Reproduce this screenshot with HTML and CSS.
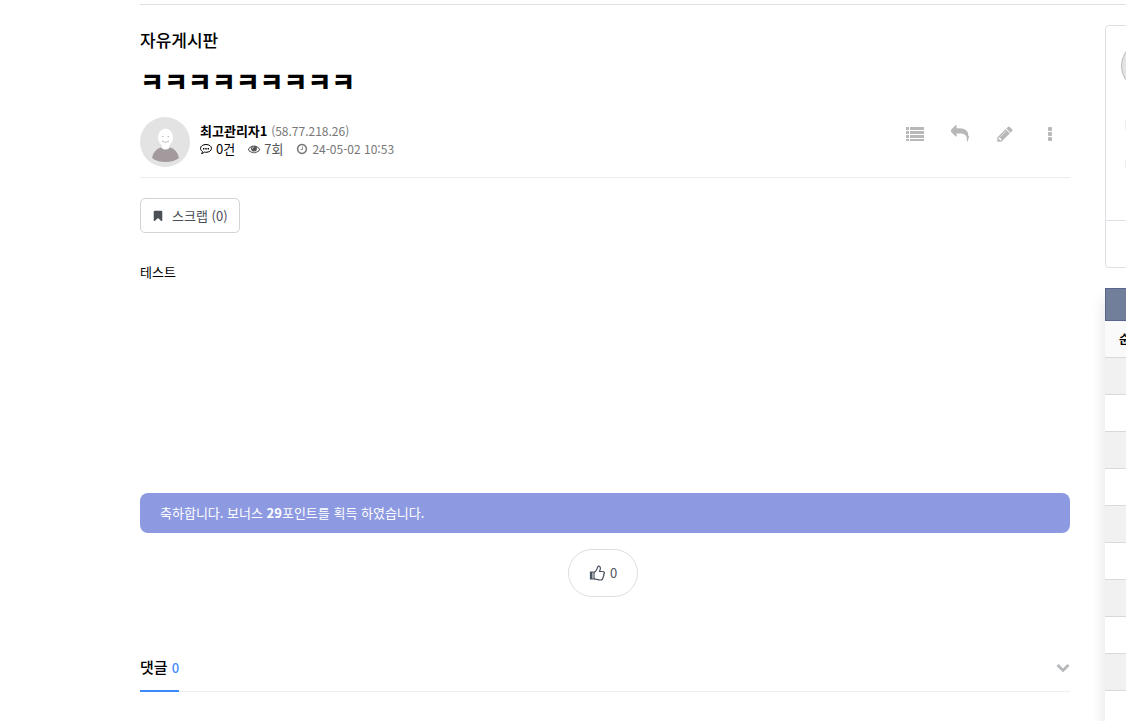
FILE: index.html
```html
<!DOCTYPE html>
<html lang="ko">
<head>
    <meta charset="UTF-8">
    <meta name="viewport" content="width=device-width, initial-scale=1.0">
    <title>자유게시판</title>
    <link rel="stylesheet" href="styles.css">
</head>
<body>
    <div class="wrapper">
        <main class="board">
            <h2 class="board-name">자유게시판</h2>
            <h1 class="post-title">ㅋㅋㅋㅋㅋㅋㅋㅋㅋ</h1>

            <header class="post-info">
                <svg class="profile" viewBox="0 0 50 50" aria-hidden="true">
                    <circle cx="25" cy="25" r="25" fill="#e3e3e3"/>
                    <path d="M12 41q1-8 10-11h7q9 3 10 11-5 4-13.500 4T12 41z" fill="#a29a9c"/>
                    <path d="M21.500 26h8v5q-4 3-8 0z" fill="#fff"/>
                    <ellipse cx="25.500" cy="20.500" rx="7.500" ry="9" fill="#fff"/>
                    <path d="M22 19.500h1.500M27.500 19.500H29M22 24q3.500 3 7 0" fill="none" stroke="#bbb"/>
                </svg>
                <div class="post-meta">
                    <p><strong>최고관리자1</strong> <span class="num">(58.77.218.26)</span></p>
                    <p class="meta-row">
                        <a class="meta-comment" href="#comments">
                            <svg class="icon-sm" viewBox="0 0 12 12" aria-hidden="true">
                                <path d="M6 1.500c3 0 5.500 1.600 5.500 3.900S9 9.300 6 9.300c-.6 0-1.100 0-1.600-.2-.8.800-1.800 1.300-2.900 1.400.5-.5.900-1.200 1-2C1.300 7.800.5 6.700.5 5.400.5 3.100 3 1.500 6 1.500z" fill="none" stroke="currentColor"/>
                                <path d="M3 5h1.400v1.400H3zM5.300 5h1.400v1.400H5.300zM7.600 5H9v1.400H7.600z"/>
                            </svg>
                            0건
                        </a>
                        <span class="meta-hit">
                            <svg class="icon-sm" viewBox="0 0 1792 1792" aria-hidden="true"><path d="M1664 960q-152-236-381-353 61 104 61 225 0 185-131.500 316.500t-316.500 131.500-316.500-131.500-131.500-316.500q0-121 61-225-229 117-381 353 133 205 333.500 326.500t434.500 121.500 434.500-121.500 333.500-326.500zm-720-384q0-20-14-34t-34-14q-125 0-214.500 89.500t-89.500 214.500q0 20 14 34t34 14 34-14 14-34q0-86 61-147t147-61q20 0 34-14t14-34zm848 384q0 34-20 69-140 230-376.500 368.500t-499.500 138.500-499.500-139-376.500-368q-20-35-20-69t20-69q140-229 376.500-368t499.500-139 499.500 139 376.500 368q20 35 20 69z"/></svg>
                            7회
                        </span>
                        <span class="meta-date">
                            <svg class="icon-sm" viewBox="0 0 1792 1792" aria-hidden="true"><path d="M1024 544v448q0 14-9 23t-23 9h-320q-14 0-23-9t-9-23v-64q0-14 9-23t23-9h224v-352q0-14 9-23t23-9h64q14 0 23 9t9 23zm416 352q0-148-73-273t-198-198-273-73-273 73-198 198-73 273 73 273 198 198 273 73 273-73 198-198 73-273zm224 0q0 209-103 385.500t-279.500 279.500-385.500 103-385.500-103-279.500-279.500-103-385.500 103-385.500 279.500-279.500 385.500-103 385.500 103 279.500 279.500 103 385.500z"/></svg>
                            <span class="num">24-05-02 10:53</span>
                        </span>
                    </p>
                </div>
                <nav class="post-tools">
                    <a href="#list" aria-label="목록"><svg class="icon-lg" viewBox="0 0 18 18"><path d="M0 2h3v3H0zM4 2h14v3H4zM0 6h3v3H0zM4 6h14v3H4zM0 10h3v3H0zM4 10h14v3H4zM0 14h3v2H0zM4 14h14v2H4z"/></svg></a>
                    <a href="#reply" aria-label="답변"><svg class="icon-lg" viewBox="0 0 1792 1792"><path d="M1792 1120q0 166-127 451-3 7-10.500 24t-13.500 30-13 22q-12 17-28 17-15 0-23.500-10t-8.500-25q0-9 2.500-26.500t2.500-23.500q5-68 5-123 0-112-19.500-200.500t-54-153.500-89-112-117-77-146-46.500-170-23.500-194.500-7h-224v256q0 26-19 45t-45 19-45-19l-512-512q-19-19-19-45t19-45l512-512q19-19 45-19t45 19 19 45v256h224q713 0 875 403 53 134 53 333z"/></svg></a>
                    <a href="#write" aria-label="글쓰기"><svg class="icon-lg" viewBox="0 0 1792 1792"><path d="M491 1536l91-91-235-235-91 91v107h128v128h107zm523-928q0-22-22-22-10 0-17 7l-542 542q-7 7-7 17 0 22 22 22 10 0 17-7l542-542q7-7 7-17zm-54-192l416 416-832 832h-416v-416zm683 96q0 53-37 90l-166 166-416-416 166-165q36-38 90-38 53 0 91 38l235 234q37 39 37 91z"/></svg></a>
                    <button type="button" aria-label="옵션"><svg class="icon-lg" viewBox="0 0 18 18"><rect x="7" y="2" width="4" height="4" rx="1"/><rect x="7" y="7" width="4" height="4" rx="1"/><rect x="7" y="12" width="4" height="4" rx="1"/></svg></button>
                </nav>
            </header>

            <a class="scrap" href="#scrap">
                <svg class="icon-sm" viewBox="0 0 1792 1792" aria-hidden="true"><path d="M1420 128q23 0 44 9 33 13 52.500 41t19.500 62v1289q0 34-19.500 62t-52.500 41q-19 8-44 8-48 0-83-32l-441-424-441 424q-36 33-83 33-23 0-44-9-33-13-52.500-41t-19.500-62v-1289q0-34 19.500-62t52.500-41q21-9 44-9h1048z"/></svg>
                스크랩 (0)
            </a>

            <div class="post-content">테스트</div>

            <div class="bonus">축하합니다. 보너스 <strong>29</strong>포인트를 획득 하였습니다.</div>

            <div class="good-area">
                <button class="good" type="button" aria-label="추천">
                    <svg class="icon-good" viewBox="0 0 16 16" aria-hidden="true">
                        <path d="M5 7.500c1.500-.5 2.500-2.500 3-3.500.4-.8.200-2.500 1.500-2.800 1.300-.1 2 1 1.900 2.300-.1 1.200-.7 2-.9 3h3.200c1 0 1.800.8 1.700 1.600-.1.700-.4 1-.8 1.200.5.700.3 1.600-.3 2.100.2.900-.1 1.500-.6 1.900 0 1.200-1 1.700-2.200 1.700-2.500 0-4-.9-6.500-1.200" fill="none" stroke="currentColor" stroke-width="1.200"/>
                        <path d="M1.500 7h3.500v7H1.500z" fill="none" stroke="currentColor" stroke-width="1.200"/>
                        <path d="M1.500 7h2v7h-2z"/>
                    </svg>
                    0
                </button>
            </div>

            <section class="comments" id="comments">
                <button class="comments-head" type="button">
                    <span class="comments-label">댓글 <span class="count">0</span></span>
                    <svg class="icon-down" viewBox="0 0 1792 1792" aria-hidden="true"><path d="M1683 808l-742 741q-19 19-45 19t-45-19l-742-741q-19-19-19-45.500t19-45.500l166-165q19-19 45-19t45 19l531 531 531-531q19-19 45-19t45 19l166 165q19 19 19 45.500t-19 45.500z"/></svg>
                </button>
            </section>
        </main>

        <aside class="side">
            <div class="login-box">
                <div class="login-user">
                    <span class="login-photo"></span>
                    <span class="login-line"></span>
                    <span class="login-line"></span>
                </div>
            </div>
            <table class="rank">
                <thead>
                    <tr class="rank-bar"><td></td></tr>
                    <tr class="rank-head"><th>순위</th></tr>
                </thead>
                <tbody>
                    <tr><td></td></tr>
                    <tr><td></td></tr>
                    <tr><td></td></tr>
                    <tr><td></td></tr>
                    <tr><td></td></tr>
                    <tr><td></td></tr>
                    <tr><td></td></tr>
                    <tr><td></td></tr>
                    <tr><td></td></tr>
                    <tr><td></td></tr>
                </tbody>
            </table>
        </aside>
    </div>
</body>
</html>
```
FILE: styles.css
```css
* {
    box-sizing: border-box;
}

body {
    margin: 0;
    background: #fff;
    color: #000;
    font-family: "Noto Sans CJK KR", sans-serif;
    font-size: 13px;
    line-height: 18px;
    overflow: hidden;
}

h1, h2, p {
    margin: 0;
}

a {
    color: inherit;
    text-decoration: none;
}

button {
    padding: 0;
    border: 0;
    background: none;
    color: inherit;
    font: inherit;
    cursor: pointer;
}

svg {
    display: block;
    flex: none;
    fill: currentColor;
}

.wrapper {
    display: flex;
    gap: 35px;
    margin: 4px 0 0 140px;
    padding-top: 20px;
    border-top: 1px solid #dde0e4;
    overflow: hidden;
}

.board {
    flex: 1;
    min-width: 0;
}

.board-name {
    padding-top: 3px;
    font-size: 17px;
    font-weight: 500;
    line-height: 24px;
}

.post-title {
    margin-top: 11px;
    font-size: 26px;
    font-weight: 900;
    line-height: 36px;
}

.post-info {
    display: flex;
    gap: 10px;
    margin-top: 18px;
    padding-bottom: 10px;
    border-bottom: 1px solid #ececec;
}

.profile {
    width: 50px;
    height: 50px;
}

.post-meta {
    flex: 1;
    padding-top: 5px;
    white-space: nowrap;
}

.post-meta strong {
    font-weight: 700;
}

.num {
    color: #777;
    font-size: 12px;
}

.meta-row,
.meta-row > * {
    display: flex;
    align-items: center;
}

.meta-row {
    gap: 13px;
}

.meta-row > * {
    gap: 4px;
}

.meta-hit {
    color: #555;
}

.meta-date {
    color: #777;
}

.icon-sm {
    width: 12px;
    height: 12px;
}

.icon-lg {
    width: 18px;
    height: 18px;
}

.post-tools {
    display: flex;
    gap: 5px;
    color: #b8b8b8;
}

.post-tools > * {
    display: flex;
    align-items: center;
    justify-content: center;
    width: 40px;
    height: 34px;
}

.scrap {
    display: inline-flex;
    align-items: center;
    gap: 8px;
    height: 35px;
    margin-top: 20px;
    padding: 0 11px;
    border: 1px solid #d0d3d8;
    border-radius: 5px;
    color: #4b4f56;
}

.post-content {
    min-height: 200px;
    margin: 30px 0;
}

.bonus {
    padding: 11px 20px;
    border-radius: 8px;
    background: #8d9ae1;
    color: #fff;
}

.good-area {
    display: flex;
    justify-content: center;
    margin-top: 16px;
}

.good {
    display: flex;
    align-items: center;
    justify-content: center;
    gap: 5px;
    width: 70px;
    height: 48px;
    margin-right: 4px;
    border: 1px solid #dedede;
    border-radius: 24px;
    color: #4b545e;
}

.icon-good {
    width: 16px;
    height: 16px;
}

.comments {
    margin-top: 45px;
    border-bottom: 1px solid #eee;
}

.comments-head {
    display: flex;
    align-items: center;
    justify-content: space-between;
    width: 100%;
}

.comments-label {
    height: 50px;
    margin-bottom: -1px;
    border-bottom: 2px solid #3a8afd;
    font-size: 15px;
    font-weight: 500;
    line-height: 50px;
}

.count {
    color: #3a8afd;
    font-size: 13px;
}

.icon-down {
    width: 14px;
    height: 14px;
    color: #b5b8bb;
}

/* side column, runs past the right edge of the window */
.side {
    flex: 0 0 235px;
    margin-right: -214px;
}

.login-box {
    height: 243px;
    border: 1px solid #dde0e4;
    border-radius: 4px;
}

.login-user {
    display: flex;
    flex-direction: column;
    height: 195px;
    padding: 15px;
    border-bottom: 1px solid #dde0e4;
}

.login-photo {
    width: 50px;
    height: 50px;
    border: 1px solid #bbb;
    border-radius: 50%;
    background: #e3e3e3;
}

.login-line {
    height: 10px;
    margin: 29px 0 0 4px;
    background: #f0f0f0;
}

.rank {
    width: 100%;
    margin-top: 20px;
    border-collapse: separate;
    border-spacing: 0;
    box-shadow: 0 10px 14px rgba(0, 0, 0, 0.12);
}

.rank td,
.rank th {
    height: 37px;
    padding: 0 14px;
    border-bottom: 1px solid #d9d9d9;
    background: #fff;
    text-align: left;
    font-size: 12px;
}

.rank .rank-bar td {
    height: 33px;
    border: 1px solid #57658f;
    background: #717f9b;
}

.rank .rank-head th {
    background: #fafafa;
}

.rank tbody tr:nth-child(odd) td {
    background: #f1f1f1;
}
```
